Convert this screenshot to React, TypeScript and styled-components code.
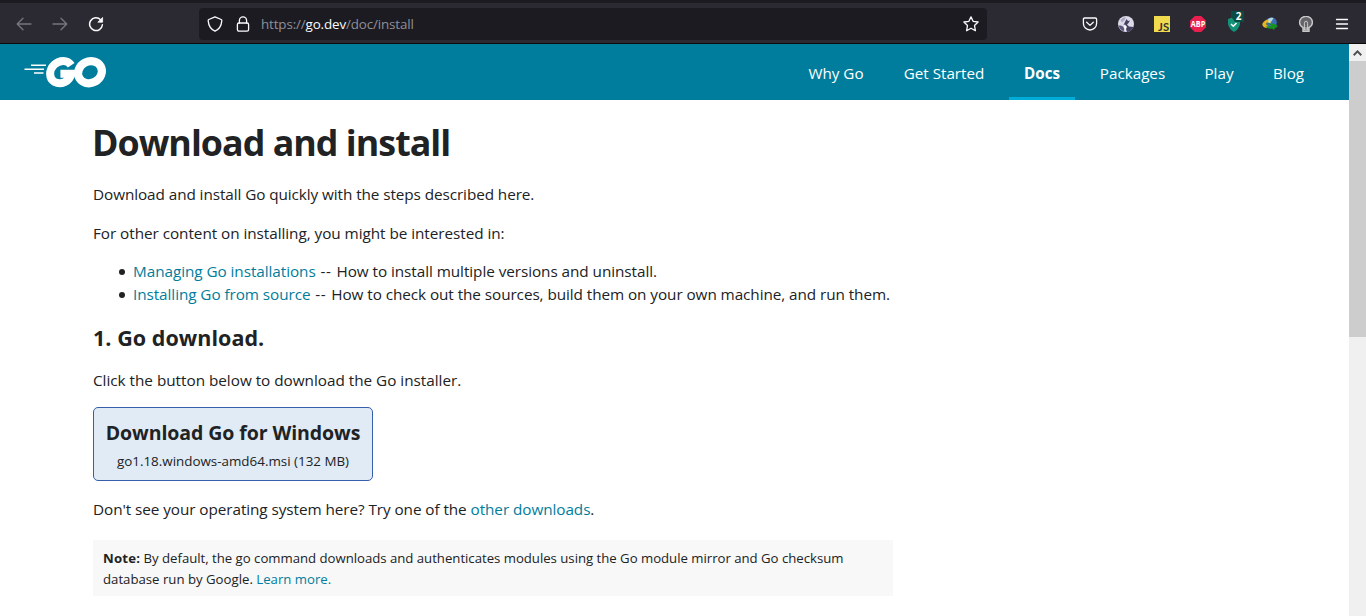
import React from "react";
import styled, { createGlobalStyle } from "styled-components";

const GlobalStyle = createGlobalStyle`
  * { box-sizing: border-box; }
  html, body { margin: 0; padding: 0; }
  body {
    width: 1366px; height: 616px; overflow: hidden; background: #fff; color: #202224;
    font-family: "Open Sans", "Noto Sans", sans-serif;
  }
`;

const Window = styled.div`
  display: flex;
  flex-direction: column;
  width: 1366px;
  height: 616px;
  overflow: hidden;
`;

const Toolbar = styled.div`
  display: flex;
  align-items: center;
  flex: none;
  height: 44px;
  padding: 2px 16px 0 16px;
  background: #2b2a33;
  border-top: 3px solid #1c1b22;
  border-bottom: 1px solid #0c0c0d;
  color: #fbfbfe;
`;

const NavButtons = styled.div`
  display: flex;
  gap: 20px;
  width: 183px;
`;

const Icon = styled.svg<{ $dim?: boolean }>`
  display: block;
  flex: none;
  fill: none;
  stroke: currentColor;
  stroke-width: 1.3;
  stroke-linecap: round;
  stroke-linejoin: round;
  color: ${(p) => (p.$dim ? "#77767e" : "#fbfbfe")};
`;

const AddressBar = styled.div`
  display: flex;
  align-items: center;
  width: 788px;
  height: 32px;
  padding: 0 8px;
  border-radius: 4px;
  background: #1c1b22;
`;

const BarIcons = styled.div`
  display: flex;
  gap: 12px;
  width: 54px;
`;

const Url = styled.span`
  flex: 1;
  font-size: 13.4px;
  line-height: 20px;
  letter-spacing: -0.14px;
  color: #8f8f99;
  b { font-weight: 400; color: #fbfbfe; }
`;

const Extensions = styled.div`
  display: flex;
  gap: 20px;
  margin-left: auto;
`;

const Viewport = styled.div`
  display: flex;
  flex: 1;
  min-height: 0;
`;

const Page = styled.div`
  flex: 1;
  min-width: 0;
`;

const SiteHeader = styled.header`
  display: flex;
  align-items: center;
  justify-content: space-between;
  height: 56px;
  padding: 0 30px 0 24px;
  background: #007d9c;
`;

const Menu = styled.nav`
  display: flex;
  gap: 10px;
  height: 56px;
`;

const MenuItem = styled.a<{ $width: number; $active?: boolean }>`
  width: ${(p) => p.$width}px;
  height: 56px;
  padding-top: 3px;
  border-bottom: 3px solid ${(p) => (p.$active ? "#00add8" : "transparent")};
  color: #fff;
  font-size: 15.2px;
  font-weight: ${(p) => (p.$active ? 700 : 400)};
  line-height: 52px;
  text-align: center;
  white-space: nowrap;
`;

const Article = styled.main`
  display: flex;
  flex-direction: column;
  align-items: flex-start;
  width: 893px;
  padding: 17px 0 0 93px;
  white-space: nowrap;
`;

const Title = styled.h1`
  margin: 0 0 0 -1px;
  font-size: 35.8px;
  line-height: 50px;
  letter-spacing: -0.98px;
`;

const Subtitle = styled.h2`
  margin: 17px 0 0;
  font-size: 21.5px;
  line-height: 30px;
  letter-spacing: 0.05px;
`;

const Paragraph = styled.p<{ $top: number; $spacing?: number }>`
  margin: ${(p) => p.$top}px 0 0;
  font-size: 15.3px;
  line-height: 24px;
  letter-spacing: ${(p) => p.$spacing ?? 0}px;
`;

const List = styled.ul`
  margin: 15px 0 0;
  padding: 0;
  list-style: none;
`;

const ListItem = styled.li<{ $spacing?: number }>`
  display: flex;
  align-items: center;
  font-size: 15.3px;
  line-height: 23px;
  letter-spacing: ${(p) => p.$spacing ?? 0}px;
  white-space: pre;
  &::before {
    content: "";
    width: 6px;
    height: 6px;
    margin: 1px 8px 0 26px;
    border-radius: 50%;
    background: #202224;
  }
`;

const Dashes = styled.span`
  letter-spacing: 0.75px;
`;

const Link = styled.a`
  color: #007d9c;
`;

const DownloadButton = styled.a`
  display: flex;
  flex-direction: column;
  align-items: center;
  width: 280px;
  height: 74px;
  margin-top: 15px;
  padding-top: 11px;
  border: 1px solid #375eab;
  border-radius: 5px;
  background: #e0ebf5;
`;

const DownloadName = styled.span`
  font-size: 19.5px;
  font-weight: 700;
  line-height: 28px;
  letter-spacing: -0.08px;
`;

const DownloadFile = styled.span`
  margin-top: 2px;
  font-size: 13.4px;
  line-height: 24px;
`;

const Note = styled.div`
  width: 800px;
  height: 56px;
  margin-top: 19px;
  padding: 8px 10px;
  background: #f8f8f8;
  font-size: 13.2px;
  line-height: 21px;
  b { letter-spacing: 0.2px; }
`;

const NoteLine = styled.div<{ $spacing: number }>`
  letter-spacing: ${(p) => p.$spacing}px;
`;

const ScrollTrack = styled.div`
  flex: none;
  width: 17px;
  background: #f0f0f0;
`;

const ScrollArrow = styled.div`
  display: flex;
  align-items: center;
  justify-content: center;
  height: 17px;
`;

const ScrollThumb = styled.div`
  height: 276px;
  background: #cdcdcd;
`;

const GoLogo = () => (
  <svg width="84" height="34" viewBox="24 55 84 34" fill="none">
    <g stroke="#fff" strokeWidth="1.4">
      <path d="M31 65.2H46M24.5 69.2H44M34 73H43.5" />
    </g>
    <path d="M71.2 65.2C67.5 59.6 59.5 59.8 54.3 64.7C48.6 70.3 48.8 78.6 54.6 82C61 85.4 69.6 81.6 71.3 73.8H60.4" stroke="#fff" strokeWidth="8" />
    <ellipse cx="90" cy="72.2" rx="12.2" ry="10.8" transform="rotate(-28 90 72.2)" stroke="#fff" strokeWidth="8.2" />
  </svg>
);

const App = () => (
  <>
    <GlobalStyle />
    <Window>
      <Toolbar>
        <NavButtons>
          <Icon $dim width="16" height="16" viewBox="0 0 16 16"><path d="M1.2 8H15M7 2.2L1.2 8L7 13.8" /></Icon>
          <Icon $dim width="16" height="16" viewBox="0 0 16 16"><path d="M1 8H14.8M9 2.2L14.8 8L9 13.8" /></Icon>
          <Icon width="16" height="16" viewBox="0 0 16 16">
            <path d="M12.6 3.7A6.4 6.4 0 1 0 14.4 8.8" strokeWidth="1.5" />
            <path d="M14.6 1.8V6.2H10.2Z" fill="currentColor" strokeWidth=".8" />
          </Icon>
        </NavButtons>
        <AddressBar>
          <BarIcons>
            <Icon width="16" height="16" viewBox="0 0 16 16"><path d="M8 .8L14.2 3.5Q15 3.9 14.8 4.9C14.4 9.7 12 13.4 8 15.2C4 13.4 1.6 9.7 1.2 4.9Q1 3.9 1.8 3.5Z" /></Icon>
            <Icon width="16" height="16" viewBox="0 0 16 16"><rect x="2.4" y="7" width="11.2" height="8.2" rx="1.6" /><path d="M4.4 7V4.4a3.6 3.6 0 0 1 7.2 0V7" /></Icon>
          </BarIcons>
          <Url>https://<b>go.dev</b>/doc/install</Url>
          <Icon width="16" height="16" viewBox="0 0 16 16"><path d="M8 .9L10.1 5.3L15.1 6L11.5 9.5L12.4 14.7L8 12.3L3.6 14.7L4.5 9.5L.9 6L5.9 5.3Z" /></Icon>
        </AddressBar>
        <Extensions>
          <Icon width="16" height="16" viewBox="0 0 16 16"><path d="M2.7 2H13.3Q14.6 2 14.6 3.3V7.4A6.6 6.6 0 0 1 1.4 7.4V3.3Q1.4 2 2.7 2ZM4.7 6.2L8 9.4L11.3 6.2" /></Icon>
          <svg width="16" height="16" viewBox="0 0 16 16">
            <circle cx="8" cy="8" r="8" fill="#dddbea" />
            <path d="M.3 9.5Q1.5 13.5 5.5 15.6L6.5 13L5 10.5L3 9.5Z" fill="#5d5879" />
            <path d="M8.5 3L10 5L12 4.5L10.5 7L9 8.5L11 10.5L15.5 11Q13.5 15.3 9 16L8 13L9 11L7 8.5L5.5 9L7 6Z" fill="#47415f" />
            <path d="M2.5 4Q5 1 8 1L6.5 4L4 6.5Z" fill="#a9a5c0" />
            <path d="M6.5 9L8.5 10.5L7.5 13L8 15.8L6.3 13Z" fill="#fff" />
          </svg>
          <svg width="16" height="16" viewBox="0 0 16 16">
            <rect width="16" height="16" fill="#f0db4f" />
            <text x="4.1" y="14.8" textLength="11" lengthAdjust="spacingAndGlyphs" fontFamily="Lato, sans-serif" fontWeight="700" fontSize="10.5" fill="#323330">JS</text>
          </svg>
          <svg width="16" height="16" viewBox="0 0 16 16">
            <path d="M4.8 0H11.2L16 4.8V11.2L11.2 16H4.8L0 11.2V4.8Z" fill="#e81f4f" />
            <text x="8" y="10.9" textAnchor="middle" textLength="14.4" lengthAdjust="spacingAndGlyphs" fontFamily="Open Sans, sans-serif" fontWeight="700" fontSize="8.4" fill="#fff">ABP</text>
          </svg>
          <svg width="16" height="16" viewBox="0 0 16 16" overflow="visible">
            <rect x="5" y="-5" width="13" height="11" fill="#0c4b43" />
            <path d="M2 3L8 1L14 3V8Q13 13 8 16Q3 13 2 8Z" fill="#149278" />
            <path d="M6 -2H17V6H9L6 2Z" fill="#0c4b43" />
            <path d="M5 8L7.3 10.3L10.5 7" stroke="#fff" strokeWidth="1.5" fill="none" />
            <text x="12.7" y="4" textAnchor="middle" fontFamily="Open Sans, sans-serif" fontWeight="700" fontSize="10" fill="#fff">2</text>
          </svg>
          <svg width="16" height="16" viewBox="0 0 16 16">
            <circle cx="9.5" cy="6.5" r="5.3" fill="#3a6fb8" />
            <path d="M5.5 3.5Q8 .8 11.5 2L9.5 5.5L6.5 6Z" fill="#b9d7dd" />
            <path d="M5 3.5Q0 6 .3 9Q1.5 12 5 12L6.5 10Q3.5 9 4.5 7L7 5Z" fill="#e7b522" />
            <path d="M6 6.5L10 8.5L10.5 7L16 10L11 14L10.5 12.5Q6 13.5 3.5 10.5L7 10.2L9 10Z" fill="#169223" />
            <path d="M5 6.3L8 4.5L9 7.3Z" fill="#eee765" />
          </svg>
          <svg width="16" height="16" viewBox="0 0 16 16" fill="none" stroke="#c9c9c9" strokeWidth="1.4">
            <path d="M5 11.7Q1.6 9.7 1.6 6.5A6.2 6 0 0 1 14.4 6.5Q14.4 9.7 11 11.7V15.2H5Z" fill="#64646a" />
            <path d="M6.4 14V7.2Q6.4 5.2 8 5.2T9.6 7.2V14M5 12H11M5 13.8H11" strokeWidth="1" />
          </svg>
          <Icon width="16" height="16" viewBox="0 0 16 16"><path d="M2.5 3.5H13.5M2.5 8H13.5M2.5 12.5H13.5" /></Icon>
        </Extensions>
      </Toolbar>
      <Viewport>
        <Page>
          <SiteHeader>
            <GoLogo />
            <Menu>
              <MenuItem $width={86}>Why Go</MenuItem>
              <MenuItem $width={110}>Get Started</MenuItem>
              <MenuItem $width={66} $active>Docs</MenuItem>
              <MenuItem $width={95}>Packages</MenuItem>
              <MenuItem $width={58}>Play</MenuItem>
              <MenuItem $width={61}>Blog</MenuItem>
            </Menu>
          </SiteHeader>
          <Article>
            <Title>Download and install</Title>
            <Paragraph $top={15} $spacing={-0.08}>Download and install Go quickly with the steps described here.</Paragraph>
            <Paragraph $top={15} $spacing={-0.05}>For other content on installing, you might be interested in:</Paragraph>
            <List>
              <ListItem $spacing={-0.06}><Link>Managing Go installations</Link><Dashes> -- </Dashes>How to install multiple versions and uninstall.</ListItem>
              <ListItem $spacing={-0.07}><Link>Installing Go from source</Link><Dashes> -- </Dashes>How to check out the sources, build them on your own machine, and run them.</ListItem>
            </List>
            <Subtitle>1. Go download.</Subtitle>
            <Paragraph $top={15} $spacing={-0.02}>Click the button below to download the Go installer.</Paragraph>
            <DownloadButton>
              <DownloadName>Download Go for Windows</DownloadName>
              <DownloadFile>go1.18.windows-amd64.msi (132 MB)</DownloadFile>
            </DownloadButton>
            <Paragraph $top={16} $spacing={-0.07}>Don't see your operating system here? Try one of the <Link>other downloads</Link>.</Paragraph>
            <Note>
              <NoteLine $spacing={-0.02}><b>Note:</b> By default, the go command downloads and authenticates modules using the Go module mirror and Go checksum</NoteLine>
              <NoteLine $spacing={0}>database run by Google. <Link>Learn more.</Link></NoteLine>
            </Note>
          </Article>
        </Page>
        <ScrollTrack>
          <ScrollArrow>
            <svg width="9" height="6" viewBox="0 0 9 6" fill="none" stroke="#505050" strokeWidth="2"><path d="M.7 5.2L4.5 1.4L8.3 5.2" /></svg>
          </ScrollArrow>
          <ScrollThumb />
        </ScrollTrack>
      </Viewport>
    </Window>
  </>
);

export default App;
